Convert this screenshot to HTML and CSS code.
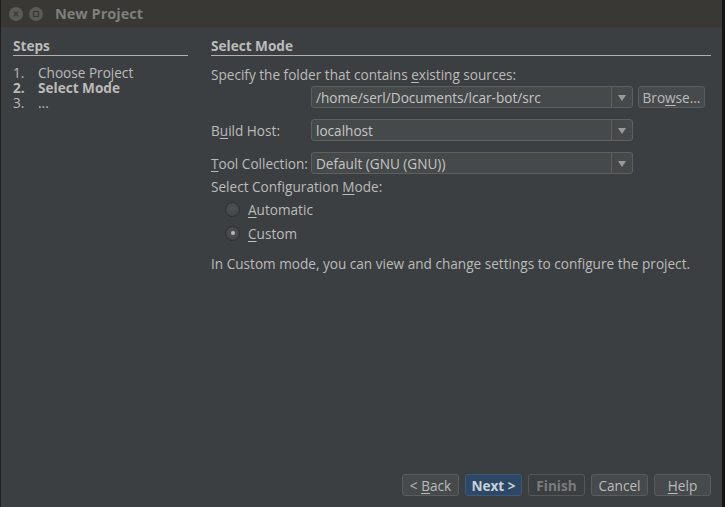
FILE: index.html
```html
<!DOCTYPE html>
<html>
<head>
<meta charset="utf-8">
<link rel="stylesheet" href="styles.css">
</head>
<body>
<div class="window">
  <div class="titlebar">
    <span class="wbtn"><svg width="14" height="14" viewBox="0 0 14 14"><circle cx="7" cy="7" r="7" fill="#5b5a56"/><path d="M4.8 4.8 L9.2 9.2 M9.2 4.8 L4.8 9.2" stroke="#3a3936" stroke-width="1.4"/></svg></span>
    <span class="wbtn"><svg width="14" height="14" viewBox="0 0 14 14"><circle cx="7" cy="7" r="7" fill="#5b5a56"/><rect x="4.5" y="4.5" width="5" height="5" fill="none" stroke="#3a3936" stroke-width="1.2"/></svg></span>
    <span class="title">New Project</span>
  </div>
  <div class="content">
    <div class="main">
      <div class="steps">
        <div class="heading">Steps</div>
        <ol class="steplist">
          <li><span class="num">1.</span><span>Choose Project</span></li>
          <li class="current"><span class="num">2.</span><span>Select Mode</span></li>
          <li><span class="num">3.</span><span>...</span></li>
        </ol>
      </div>
      <div class="panel">
        <div class="heading">Select Mode</div>
        <div class="row-label">Specify the folder that contains <u>e</u>xisting sources:</div>
        <div class="row indent">
          <div class="combo"><span class="val">/home/serl/Documents/lcar-bot/src</span><span class="arrow"></span></div>
          <div class="btn browse"><span>Bro<u>w</u>se...</span></div>
        </div>
        <div class="row">
          <span class="lbl">B<u>u</u>ild Host:</span>
          <div class="combo"><span class="val">localhost</span><span class="arrow"></span></div>
        </div>
        <div class="row">
          <span class="lbl"><u>T</u>ool Collection:</span>
          <div class="combo"><span class="val">Default (GNU (GNU))</span><span class="arrow"></span></div>
        </div>
        <div class="row-label mode">Select Configuration <u>M</u>ode:</div>
        <div class="radio first"><span class="circle"></span><span><u>A</u>utomatic</span></div>
        <div class="radio"><span class="circle checked"></span><span><u>C</u>ustom</span></div>
        <div class="info">In Custom mode, you can view and change settings to configure the project.</div>
      </div>
    </div>
    <div class="buttons">
      <div class="btn"><span>&lt; <u>B</u>ack</span></div>
      <div class="btn default"><span>Next &gt;</span></div>
      <div class="btn disabled"><span>Finish</span></div>
      <div class="btn"><span>Cancel</span></div>
      <div class="btn"><span><u>H</u>elp</span></div>
    </div>
  </div>
</div>
</body>
</html>
```
FILE: styles.css
```css
html, body { margin: 0; padding: 0; }
body {
  width: 725px; height: 507px; overflow: hidden;
  background: #3c3f41;
  font-family: "Open Sans", "DejaVu Sans", sans-serif;
  font-size: 13.6px;
  color: #bbbbbb;
}
u { text-decoration: underline; text-underline-offset: 2px; }
.window {
  height: 507px;
  display: flex; flex-direction: column;
  border-left: 1px solid #1e1f20;
  border-right: 3px solid #151515;
  box-sizing: border-box;
}
.titlebar {
  height: 27px; flex: none;
  background: #393835;
  display: flex; align-items: center;
  padding-left: 8px;
  gap: 6px;
}
.wbtn { display: flex; width: 14px; height: 14px; }
.title {
  margin-left: 6px;
  font-weight: bold; font-size: 14.5px;
  color: #7f7f7b;
}
.content {
  flex: 1;
  display: flex; flex-direction: column;
  padding: 10px 11px 11px 12px;
}
.main { flex: 1; display: flex; }
.heading {
  font-weight: bold;
  line-height: 17px;
  border-bottom: 1px solid #b0b0b0;
  padding-bottom: 1px;
}
.steps { width: 175px; }
.steplist { list-style: none; margin: 9px 0 0 0; padding: 0; }
.steplist li { line-height: 15px; height: 15px; }
.steplist .num { display: inline-block; width: 25px; }
.steplist li.current { font-weight: bold; }
.panel { flex: 1; margin-left: 23px; }
.row-label { margin-top: 10px; line-height: 18px; }
.row { display: flex; align-items: center; margin-top: 11px; height: 22px; }
.row.indent { margin-top: 2px; padding-left: 100px; }
.row .lbl { width: 100px; white-space: nowrap; }
.combo {
  width: 320px; height: 20px;
  border: 1px solid #5d6061; border-radius: 3px;
  background: #45494a;
  display: flex; align-items: center;
  color: #c5c5c5;
}
.combo .val { flex: 1; padding-left: 4px; white-space: nowrap; }
.combo .arrow {
  width: 20px; height: 20px;
  border-left: 1px solid #5d6061;
  position: relative;
}
.combo .arrow::after {
  content: ""; position: absolute; left: 6px; top: 8px;
  border-left: 4px solid transparent; border-right: 4px solid transparent;
  border-top: 6px solid #9a9a9a;
}
.btn {
  box-sizing: border-box;
  border: 1px solid #5a5d5f; border-radius: 3px;
  background: #474a4c;
  display: flex; align-items: center; justify-content: center;
  width: 57px; height: 22px;
  color: #bbbbbb;
  white-space: pre;
}
.browse { margin-left: 5px; width: 67px; }
.mode { margin-top: 4px; }
.radio { display: flex; align-items: center; margin-left: 14px; height: 24px; }
.radio.first { margin-top: 1px; }
.circle {
  width: 13px; height: 13px; border-radius: 50%;
  background: radial-gradient(circle at 50% 40%, #4f5254, #3f4244);
  border: 1px solid #2e3032;
  margin-right: 8px;
  position: relative;
}
.circle.checked::after {
  content: ""; position: absolute; left: 4.5px; top: 4.5px;
  width: 4px; height: 4px; border-radius: 50%; background: #b8b8b8;
}
.info { margin-top: 9px; }
.buttons { display: flex; justify-content: flex-end; gap: 6px; }
.btn.default { background: #2d4866; border-color: #3c5878; font-weight: bold; color: #c8d0d8; }
.btn.disabled { background: #3c3f41; color: #7a7c7d; font-weight: bold; border-color: #55585a; }
```
